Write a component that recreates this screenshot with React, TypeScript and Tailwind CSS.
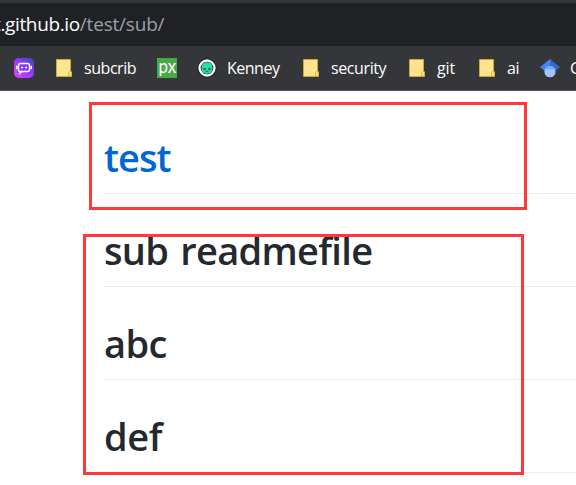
import type { ReactNode } from "react";

function FolderIcon() {
  return (
    <svg width="20" height="20" viewBox="0 0 20 20">
      <path d="M2.5 1.5H16.5V13L17.5 14V18.5H2.5Z" fill="#ffe48f" stroke="#c7a93f" />
      <path d="M14.5 18V14.5L16 13.2L17.5 14.5V18Z" fill="#ffe16d" stroke="#d6b13b" strokeWidth=".8" />
    </svg>
  );
}

function BotIcon() {
  return (
    <svg width="20" height="20" viewBox="0 0 20 20">
      <defs>
        <linearGradient id="bot" x1="0" y1="1" x2="1" y2="0">
          <stop offset="0" stopColor="#e746ff" />
          <stop offset=".5" stopColor="#9b36ff" />
          <stop offset="1" stopColor="#344bbd" />
        </linearGradient>
      </defs>
      <rect width="20" height="20" rx="5" fill="url(#bot)" />
      <rect x="4.5" y="5.5" width="11" height="8" rx="2" fill="#8a38f0" stroke="#fff" strokeWidth="1.4" />
      <path d="M2.8 7.7V11.3M17.2 7.7V11.3" stroke="#fff" strokeWidth="1.5" />
      <path d="M5.6 13.4V16.2L8.6 13.6" fill="#fff" stroke="#fff" strokeWidth=".7" />
      <path d="M8 8.7V10.3M12 8.7V10.3" stroke="#fff" strokeWidth="2" />
    </svg>
  );
}

function PxIcon() {
  return (
    <svg width="20" height="20" viewBox="0 0 20 20">
      <rect width="20" height="20" fill="#48a947" />
      <text x="1.6" y="14.6" fill="#fff" fontFamily="Lato, sans-serif" fontSize="19" textLength="17.5" lengthAdjust="spacingAndGlyphs">px</text>
    </svg>
  );
}

function AlienIcon() {
  return (
    <svg width="20" height="20" viewBox="0 0 20 20">
      <circle cx="10" cy="10" r="9.7" fill="#1c2025" />
      <circle cx="10" cy="10" r="7.5" fill="#30383b" stroke="#fff" strokeWidth="2.3" />
      <path d="M4.7 9.2C4.7 6.2 7 4.6 10 4.6S15.3 6.2 15.3 9.2V11C15.3 13.8 13 15.7 10 15.7S4.7 13.8 4.7 11Z" fill="#2bdda0" />
      <ellipse cx="7.6" cy="11" rx="1.2" ry=".9" fill="#174f45" />
      <ellipse cx="12.4" cy="11" rx="1.2" ry=".9" fill="#174f45" />
      <path d="M8.5 13Q10 14 11.5 13" fill="none" stroke="#174f45" strokeWidth=".8" />
    </svg>
  );
}

function ScholarIcon() {
  return (
    <svg width="20" height="20" viewBox="0 0 20 20">
      <path d="M10 1L0 9.2L5.5 13.2H10Z" fill="#4285f4" />
      <path d="M10 1L20 9.2L14.5 13.2H10Z" fill="#356ac3" />
      <circle cx="10" cy="13.7" r="5.6" fill="#a0c3ff" />
      <path d="M4.9 11.3C6 9.2 7.8 8.1 10 8.1S14 9.2 15.1 11.3Z" fill="#76a7fa" />
    </svg>
  );
}

function Bookmark({ icon, width, children }: { icon: ReactNode; width: string; children?: ReactNode }) {
  return (
    <div className={`flex h-5 shrink-0 items-center gap-[10px] ${width}`}>
      <span className="block size-5 shrink-0">{icon}</span>
      {children}
    </div>
  );
}

function Heading({ children }: { children: ReactNode }) {
  return (
    <div className="flex h-[93px] items-end border-b border-[#eaecef]">
      <h1 className="h-[61px] whitespace-nowrap font-semibold leading-[50px]">{children}</h1>
    </div>
  );
}

const label = "whitespace-nowrap text-base leading-5";

export default function App() {
  return (
    <div className="relative h-[485px] w-[576px] overflow-hidden bg-white font-['Open_Sans','Noto_Sans',sans-serif]">
      <header className="bg-[#35363a] pt-[3px] text-white">
        <div className="flex h-[43px] items-center overflow-hidden bg-[#202124]">
          <div className="-ml-[6px] -mt-[2px] whitespace-nowrap text-[19px] leading-6">
            <span className="tracking-[-0.36px]">t.github.io</span>
            <span className="tracking-[-0.2px] text-[#9aa0a6]">/test/sub/</span>
          </div>
        </div>
        <nav className="flex h-[45px] items-center overflow-hidden border-b border-[#55565a] pl-[14px]">
          <Bookmark icon={<BotIcon />} width="w-[40px]" />
          <Bookmark icon={<FolderIcon />} width="w-[103px]"><span className={`${label} tracking-[-0.45px]`}>subcrib</span></Bookmark>
          <Bookmark icon={<PxIcon />} width="w-[40px]" />
          <Bookmark icon={<AlienIcon />} width="w-[104px]"><span className={`${label} tracking-[-0.5px]`}>Kenney</span></Bookmark>
          <Bookmark icon={<FolderIcon />} width="w-[106px]"><span className={`${label} tracking-[-0.4px]`}>security</span></Bookmark>
          <Bookmark icon={<FolderIcon />} width="w-[70px]"><span className={`${label} tracking-[-0.1px]`}>git</span></Bookmark>
          <Bookmark icon={<FolderIcon />} width="w-[63px]"><span className={`${label} tracking-[-0.5px]`}>ai</span></Bookmark>
          <Bookmark icon={<ScholarIcon />} width="w-[110px]"><span className={label}>G</span></Bookmark>
        </nav>
      </header>
      <main className="ml-[104px] pt-[10px] text-[38px] text-[#24292e]">
        <Heading><a className="tracking-[-1px] text-[#0366d6]">test</a></Heading>
        <Heading><span className="tracking-[-0.7px] [word-spacing:3px]">sub readmefile</span></Heading>
        <Heading><span className="tracking-[-0.6px]">abc</span></Heading>
        <Heading><span className="tracking-[-0.4px]">def</span></Heading>
      </main>
      <div className="absolute left-[89px] top-[102px] h-[108px] w-[438px] border-3 border-[#ff3939]" />
      <div className="absolute left-[83px] top-[234px] h-[241px] w-[441px] border-3 border-[#ff3939]" />
    </div>
  );
}
